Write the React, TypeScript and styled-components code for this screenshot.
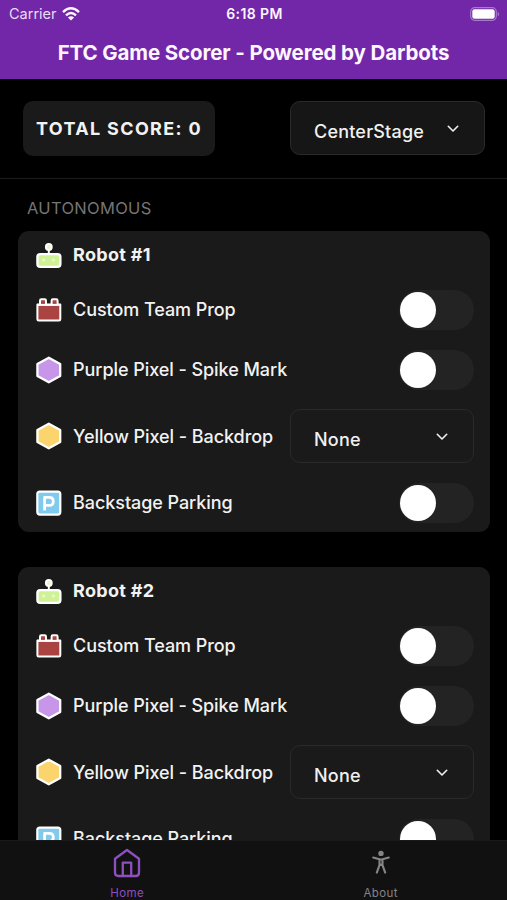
import React from "react";
import styled, { createGlobalStyle } from "styled-components";

const GlobalStyle = createGlobalStyle`
  *, *::before, *::after { box-sizing: border-box; }
  body { margin: 0; background: #000; font-family: Inter, "Liberation Sans", sans-serif; color: #f2f2f2; }
`;

const Screen = styled.div`
  width: 507px;
  height: 900px;
  display: flex;
  flex-direction: column;
  overflow: hidden;
  background: #000;
`;

const Header = styled.header`
  flex: none;
  height: 79px;
  background: #7127a8;
  color: #fdf5ff;
`;

const StatusBar = styled.div`
  height: 27px;
  padding: 0 7px 0 9px;
  display: grid;
  grid-template-columns: 1fr auto 1fr;
  align-items: center;
  font-size: 14.5px;
  line-height: 27px;
`;

const Carrier = styled.div`
  display: flex;
  align-items: center;
  gap: 5px;
  color: #eadcf5;
`;

const Clock = styled.div`
  font-weight: 600;
  font-size: 14px;
  letter-spacing: 0.4px;
`;

const Battery = styled.div`
  display: flex;
  justify-content: flex-end;
`;

const Title = styled.h1`
  margin: 0;
  height: 50px;
  line-height: 51px;
  text-align: center;
  font-size: 20.5px;
  font-weight: 700;
  letter-spacing: -0.12px;
`;

const Toolbar = styled.section`
  flex: none;
  height: 100px;
  padding: 22px 22px 0 23px;
  display: flex;
  justify-content: space-between;
  align-items: flex-start;
  border-bottom: 1px solid #1c1c1c;
`;

const Score = styled.div`
  width: 192px;
  height: 55px;
  border-radius: 10px;
  background: #1a1a1a;
  text-align: center;
  font-size: 18px;
  font-weight: 700;
  line-height: 55px;
  letter-spacing: 1.35px;
  white-space: nowrap;
`;

const SelectBox = styled.button<{ $width: number; $end: number; $fill: string }>`
  width: ${(p) => p.$width}px;
  height: 54px;
  padding: 6px ${(p) => p.$end}px 0 23px;
  display: flex;
  align-items: center;
  justify-content: space-between;
  border: 1px solid #2a2a2a;
  border-radius: 10px;
  background: ${(p) => p.$fill};
  color: #f0f0f0;
  font: 500 18px Inter, "Liberation Sans", sans-serif;
  letter-spacing: 0.2px;
  svg { margin-top: -5px; }
`;

const Content = styled.main`
  flex: 1;
  min-height: 0;
  overflow: hidden;
  padding: 0 17px 0 18px;
`;

const SectionTitle = styled.h2`
  margin: 0;
  height: 52px;
  padding: 7px 9px 0;
  line-height: 44px;
  font-size: 16.5px;
  font-weight: 400;
  letter-spacing: 0.3px;
  color: #757575;
`;

const Card = styled.section`
  height: 301px;
  padding-left: 18px;
  padding-right: 16px;
  border-radius: 11px;
  background: #1a1a1a;
  & + & { margin-top: 35px; }
`;

const Row = styled.div<{ $height: number }>`
  height: ${(p) => p.$height}px;
  display: flex;
  align-items: center;
`;

const IconSlot = styled.span`
  width: 37px;
  display: flex;
`;

const Label = styled.span<{ $bold?: boolean }>`
  flex: 1;
  font-size: 18px;
  font-weight: ${(p) => (p.$bold ? 700 : 500)};
  letter-spacing: ${(p) => (p.$bold ? "0.3px" : "-0.06px")};
  padding-bottom: ${(p) => (p.$bold ? 2 : 0)}px;
  white-space: nowrap;
`;

const Toggle = styled.button`
  width: 75px;
  height: 40px;
  padding: 2px 1px;
  display: flex;
  border: 0;
  border-radius: 20px;
  background: #232323;
`;

const Knob = styled.span`
  width: 36px;
  height: 36px;
  border-radius: 50%;
  background: #fff;
`;

const TabBar = styled.nav`
  flex: none;
  height: 60px;
  display: grid;
  grid-template-columns: 1fr 1fr;
  border-top: 1px solid #191919;
  background: #111;
`;

const Tab = styled.a<{ $active?: boolean }>`
  display: flex;
  flex-direction: column;
  align-items: center;
  padding: 7px 0 0 1px;
  font-size: 11.5px;
  line-height: 14px;
  letter-spacing: 0.4px;
  color: ${(p) => (p.$active ? "#8e4fc0" : "#858585")};
  svg { margin-bottom: 8px; }
`;

const WifiIcon = () => (
  <svg width="18" height="14" viewBox="0 0 18 14" fill="none" stroke="#fdf5ff" strokeWidth="2.4">
    <path d="M1 5.1Q9-2.4 17 5.1" />
    <path d="M4 8.3Q9 3.8 14 8.3" />
    <path d="M9 13.6 5.9 10.5Q9 8.1 12.1 10.5Z" fill="#fdf5ff" stroke="none" />
  </svg>
);

const BatteryIcon = () => (
  <svg width="30" height="14" viewBox="0 0 30 14">
    <rect x=".7" y=".7" width="25.6" height="12.6" rx="4" fill="none" stroke="#a67bca" strokeWidth="1.2" />
    <rect x="2.3" y="2.3" width="22.4" height="9.4" rx="2.2" fill="#fff" />
    <path d="M27.7 4.7Q30.6 7 27.7 9.3Z" fill="#a67bca" />
  </svg>
);

const Chevron = () => (
  <svg width="12" height="8" viewBox="0 0 12 8" fill="none" stroke="#f0f0f0" strokeWidth="1.6" strokeLinecap="round" strokeLinejoin="round">
    <path d="m1.3 1.3 4.7 4.7 4.7-4.7" />
  </svg>
);

const RobotIcon = () => (
  <svg width="26" height="26" viewBox="0 0 26 26">
    <path d="M12.8 5v7" stroke="#fff" strokeWidth="2" />
    <circle cx="12.8" cy="4.9" r="2.9" fill="#e6f8c6" stroke="#fff" strokeWidth="2" />
    <rect x="1.4" y="12.1" width="23" height="12.7" rx="2.8" fill="#d0f297" stroke="#fff" strokeWidth="2.3" />
    <path d="m7.8 15.9.8 1.4 1.4.8-1.4.8-.8 1.4-.8-1.4-1.4-.8 1.4-.8ZM17.2 15.9l.8 1.4 1.4.8-1.4.8-.8 1.4-.6-1.4-1-.8 1-.8Z" fill="#ebfbcf" />
  </svg>
);

const BrickIcon = () => (
  <svg width="26" height="26" viewBox="0 0 26 26">
    <path d="M1.4 7.6H4V3.7Q4 2.3 5.3 2.3H8.7Q10 2.3 10 3.7V7.6H15.6V3.7Q15.6 2.3 16.9 2.3H20.3Q21.6 2.3 21.6 3.7V7.6H24.3V22.2Q24.3 23.4 23 23.4H2.6Q1.4 23.4 1.4 22.2Z" fill="#a94442" stroke="#fff" strokeWidth="2" strokeLinejoin="round" />
    <path d="M1.4 7.9H24.3" stroke="#fff" strokeWidth="2" />
  </svg>
);

const HexIcon = ({ fill }: { fill: string }) => (
  <svg width="26" height="28" viewBox="0 0 26 28">
    <path d="M12.8 1.7 24.2 8V20L12.8 26.3 1.4 20V8Z" fill={fill} stroke="#fff" strokeWidth="2.3" strokeLinejoin="round" />
  </svg>
);

const ParkingIcon = () => (
  <svg width="26" height="26" viewBox="0 0 26 26" fill="none" stroke="#fff">
    <rect x="1.3" y="1.6" width="23" height="23" rx="2.5" fill="#80cbed" strokeWidth="2.2" />
    <path d="M8.6 20.4V7.4H13.3Q17.3 7.4 17.3 11.4T13.3 15.4H8.6" strokeWidth="2.7" strokeLinejoin="round" />
  </svg>
);

const HomeIcon = () => (
  <svg width="28" height="30" viewBox="0 0 28 30" fill="none" stroke="currentColor" strokeWidth="2.3" strokeLinecap="round" strokeLinejoin="round">
    <path d="M2 10.8 14 2 26 10.8V24.7Q26 28 22.7 28H5.3Q2 28 2 24.7Z" />
    <path d="M9.8 28V14.7H18.2V28" />
  </svg>
);

const PersonIcon = () => (
  <svg width="28" height="30" viewBox="0 0 28 30" fill="none" stroke="currentColor" strokeWidth="2.1" strokeLinecap="round" strokeLinejoin="round">
    <circle cx="14" cy="5.4" r="2.7" fill="currentColor" stroke="none" />
    <path d="M6.2 9.6 11.5 11.1Q14 11.8 16.5 11.1L21.8 9.6M12.5 11.7V17.2L9.8 24.6M15.5 11.7V17.2L18.2 24.6M12.5 17.2 14 16.8 15.5 17.2" />
  </svg>
);

const Switch = ({ name }: { name: string }) => (
  <Toggle role="switch" aria-checked={false} aria-label={name}>
    <Knob />
  </Toggle>
);

const RobotCard = ({ number }: { number: number }) => (
  <Card>
    <Row $height={48}>
      <IconSlot><RobotIcon /></IconSlot>
      <Label $bold>Robot #{number}</Label>
    </Row>
    <Row $height={61}>
      <IconSlot><BrickIcon /></IconSlot>
      <Label>Custom Team Prop</Label>
      <Switch name="Custom Team Prop" />
    </Row>
    <Row $height={59}>
      <IconSlot><HexIcon fill="#c896e8" /></IconSlot>
      <Label>Purple Pixel - Spike Mark</Label>
      <Switch name="Purple Pixel" />
    </Row>
    <Row $height={74}>
      <IconSlot><HexIcon fill="#fbd46d" /></IconSlot>
      <Label>Yellow Pixel - Backdrop</Label>
      <SelectBox $width={184} $end={25} $fill="#1a1a1a">None<Chevron /></SelectBox>
    </Row>
    <Row $height={59}>
      <IconSlot><ParkingIcon /></IconSlot>
      <Label>Backstage Parking</Label>
      <Switch name="Backstage Parking" />
    </Row>
  </Card>
);

export default function App() {
  return (
    <>
      <GlobalStyle />
      <Screen>
        <Header>
          <StatusBar>
            <Carrier>Carrier<WifiIcon /></Carrier>
            <Clock>6:18 PM</Clock>
            <Battery><BatteryIcon /></Battery>
          </StatusBar>
          <Title>FTC Game Scorer - Powered by Darbots</Title>
        </Header>
        <Toolbar>
          <Score>TOTAL SCORE: 0</Score>
          <SelectBox $width={195} $end={25} $fill="#161616">CenterStage<Chevron /></SelectBox>
        </Toolbar>
        <Content>
          <SectionTitle>AUTONOMOUS</SectionTitle>
          <RobotCard number={1} />
          <RobotCard number={2} />
        </Content>
        <TabBar>
          <Tab $active><HomeIcon />Home</Tab>
          <Tab><PersonIcon />About</Tab>
        </TabBar>
      </Screen>
    </>
  );
}
